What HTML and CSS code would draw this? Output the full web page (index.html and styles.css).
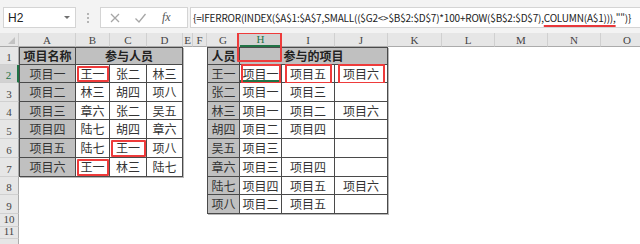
FILE: index.html
```html
<!DOCTYPE html>
<html lang="zh">
<head>
<meta charset="utf-8">
<title>Excel</title>
<link rel="stylesheet" href="styles.css">
</head>
<body>
<div class="app">
  <div class="toolbar">
    <div class="namebox"><span class="nb-text">H2</span><span class="nb-arrow"></span></div>
    <div class="grip"><i></i><i></i><i></i></div>
    <div class="fnbox">
      <svg class="ic" width="12" height="12" viewBox="0 0 12 12"><path d="M2 2L10 10M10 2L2 10" stroke="#a6a6a6" stroke-width="1.3" fill="none"/></svg>
      <svg class="ic" width="13" height="12" viewBox="0 0 13 12"><path d="M1.5 6.5L5 10L11.5 2" stroke="#a6a6a6" stroke-width="1.3" fill="none"/></svg>
      <span class="fx">fx</span>
    </div>
    <div class="formula">{=IFERROR(INDEX($A$1:$A$7,SMALL(($G2&lt;&gt;$B$2:$D$7)*100+ROW($B$2:$D$7),<span class="uline">COLUMN(A$1))),</span>"")}</div>
  </div>

  <div class="sheet">
    <div class="corner"><span class="tri"></span></div>
    <div class="ch k2">A</div><div class="ch k3">B</div><div class="ch k4">C</div><div class="ch k5">D</div>
    <div class="ch k6">E</div><div class="ch k7">F</div><div class="ch k8">G</div><div class="ch k9 sel">H</div>
    <div class="ch k10">I</div><div class="ch k11">J</div><div class="ch k12">K</div><div class="ch k13">L</div>
    <div class="ch k14">M</div><div class="ch k15">N</div><div class="ch k16">O</div>

    <div class="rh r1">1</div>
    <div class="rh r2 sel">2</div>
    <div class="rh r3">3</div>
    <div class="rh r4">4</div>
    <div class="rh r5">5</div>
    <div class="rh r6">6</div>
    <div class="rh r7">7</div>
    <div class="rh r8">8</div>
    <div class="rh r9">9</div>
    <div class="rh r10">10</div>
    <div class="rh r11">11</div>
    <div class="rh r12"></div>

    <div class="tbl left">
      <div class="c g b">项目名称</div><div class="c g b span3">参与人员</div>
      <div class="c g">项目一</div><div class="c mark">王一</div><div class="c">张二</div><div class="c">林三</div>
      <div class="c g">项目二</div><div class="c">林三</div><div class="c">胡四</div><div class="c">项八</div>
      <div class="c g">项目三</div><div class="c">章六</div><div class="c">张二</div><div class="c">吴五</div>
      <div class="c g">项目四</div><div class="c">陆七</div><div class="c">胡四</div><div class="c">章六</div>
      <div class="c g">项目五</div><div class="c">陆七</div><div class="c mark">王一</div><div class="c">项八</div>
      <div class="c g">项目六</div><div class="c mark">王一</div><div class="c">林三</div><div class="c">陆七</div>
    </div>

    <div class="tbl right">
      <div class="c g b">人员</div><div class="c g b span3">参与的项目</div>
      <div class="c g">王一</div><div class="c active markh">项目一</div><div class="c markr">项目五</div><div class="c markr">项目六</div>
      <div class="c g">张二</div><div class="c">项目一</div><div class="c">项目三</div><div class="c"></div>
      <div class="c g">林三</div><div class="c">项目一</div><div class="c">项目二</div><div class="c">项目六</div>
      <div class="c g">胡四</div><div class="c">项目二</div><div class="c">项目四</div><div class="c"></div>
      <div class="c g">吴五</div><div class="c">项目三</div><div class="c"></div><div class="c"></div>
      <div class="c g">章六</div><div class="c">项目三</div><div class="c">项目四</div><div class="c"></div>
      <div class="c g">陆七</div><div class="c">项目四</div><div class="c">项目五</div><div class="c">项目六</div>
      <div class="c g">项八</div><div class="c">项目二</div><div class="c">项目五</div><div class="c"></div>
    </div>

    <div class="hbox"></div>
  </div>
</div>
</body>
</html>
```
FILE: styles.css
```css
html, body {
  margin: 0;
  padding: 0;
  background: #ffffff;
  overflow: hidden;
}
.app {
  width: 640px;
  height: 244px;
  overflow: hidden;
  font-family: "Liberation Sans", "Noto Sans CJK SC", sans-serif;
}

/* ---------- toolbar ---------- */
.toolbar {
  height: 33px;
  box-sizing: border-box;
  padding-top: 7px;
  background: #f3f3f3;
  display: flex;
  align-items: flex-start;
}
.namebox {
  margin-left: 3px;
  width: 73px;
  height: 21px;
  box-sizing: border-box;
  background: #fff;
  border: 1px solid #d4d4d4;
  display: flex;
  align-items: center;
  justify-content: space-between;
  padding: 0 5px 0 4px;
}
.nb-text {
  font-size: 12px;
  color: #222;
}
.nb-arrow {
  width: 0;
  height: 0;
  border-left: 3px solid transparent;
  border-right: 3px solid transparent;
  border-top: 3px solid #707070;
}
.grip {
  width: 24px;
  height: 21px;
  display: flex;
  flex-direction: column;
  align-items: center;
  justify-content: center;
  gap: 2px;
}
.grip i {
  display: block;
  width: 2px;
  height: 2px;
  background: #b5b5b5;
}
.fnbox {
  width: 88px;
  height: 21px;
  box-sizing: border-box;
  background: #fff;
  border: 1px solid #d4d4d4;
  display: flex;
  align-items: center;
  padding-left: 8px;
  gap: 13px;
}
.fx {
  font-family: "Liberation Serif", serif;
  font-style: italic;
  font-size: 12px;
  color: #555;
  margin-left: 2px;
}
.formula {
  margin-left: 2px;
  flex: 1;
  height: 21px;
  box-sizing: border-box;
  background: #fff;
  border: 1px solid #d4d4d4;
  border-right: none;
  padding-left: 2px;
  font-family: "Noto Sans CJK SC", "Liberation Sans", sans-serif;
  font-size: 10px;
  letter-spacing: -0.2px;
  line-height: 19px;
  color: #222;
  white-space: nowrap;
  overflow: hidden;
}
.uline {
  text-decoration: underline;
  text-decoration-color: #e8383a;
  text-decoration-thickness: 2px;
  text-underline-offset: 3px;
}

/* ---------- sheet ---------- */
.sheet {
  display: grid;
  grid-template-columns: 19px 57px 34px 37px 36px 10px 14px 33px 42px 53px 53px 54px 53px 53px 53px 53px;
  grid-template-rows: 14px 18px 18px 19px 18px 19px 19px 19px 18px 19px 13px 12px 13px;
  height: 211px;
  overflow: hidden;
}
.corner {
  grid-row: 1;
  grid-column: 1;
  background: #e6e6e6;
  border-right: 1px solid #d0d0d0;
  border-bottom: 1px solid #ababab;
  box-sizing: border-box;
  position: relative;
}
.tri {
  position: absolute;
  right: 3px;
  bottom: 2px;
  width: 0;
  height: 0;
  border-left: 7px solid transparent;
  border-bottom: 7px solid #c2c2c2;
}
.ch {
  grid-row: 1;
  background: #e6e6e6;
  border-right: 1px solid #d0d0d0;
  border-bottom: 1px solid #ababab;
  box-sizing: border-box;
  font-family: "Liberation Serif", "DejaVu Serif", serif;
  font-size: 11px;
  color: #444;
  display: flex;
  align-items: flex-end;
  justify-content: center;
  line-height: 12px;
}
.k2 { grid-column: 2; }
.k3 { grid-column: 3; }
.k4 { grid-column: 4; }
.k5 { grid-column: 5; }
.k6 { grid-column: 6; }
.k7 { grid-column: 7; }
.k8 { grid-column: 8; }
.k9 { grid-column: 9; }
.k10 { grid-column: 10; }
.k11 { grid-column: 11; }
.k12 { grid-column: 12; }
.k13 { grid-column: 13; }
.k14 { grid-column: 14; }
.k15 { grid-column: 15; }
.k16 { grid-column: 16; }
.ch.sel {
  background: #d2d2d2;
  color: #217346;
  border-bottom: 2px solid #217346;
}
.rh {
  grid-column: 1;
  background: #e6e6e6;
  border-right: 1px solid #ababab;
  border-bottom: 1px solid #d0d0d0;
  box-sizing: border-box;
  font-family: "Liberation Serif", "DejaVu Serif", serif;
  font-size: 11px;
  color: #444;
  display: flex;
  align-items: flex-end;
  justify-content: center;
  line-height: 14px;
}
.rh.sel {
  color: #217346;
  background: #d2d2d2;
  border-right: 2px solid #217346;
}
.r1 { grid-row: 2; }
.r2 { grid-row: 3; }
.r3 { grid-row: 4; }
.r4 { grid-row: 5; }
.r5 { grid-row: 6; }
.r6 { grid-row: 7; }
.r7 { grid-row: 8; }
.r8 { grid-row: 9; }
.r9 { grid-row: 10; }
.r10 { grid-row: 11; }
.r11 { grid-row: 12; }
.r12 { grid-row: 13; }

/* ---------- tables ---------- */
.tbl {
  display: grid;
  border-top: 1px solid #4a4a4a;
  border-left: 1px solid #4a4a4a;
  box-shadow: 1px 1px 0 #b8b8b8;
  font-family: "Noto Sans CJK SC", sans-serif;
  font-size: 12px;
  color: #333;
  z-index: 1;
}
.tbl.left {
  grid-column: 2 / 6;
  grid-row: 2 / 9;
  grid-template-columns: 56px 34px 37px 36px;
  grid-template-rows: 17px 18px 19px 18px 19px 19px 19px;
}
.tbl.right {
  grid-column: 8 / 12;
  grid-row: 2 / 11;
  grid-template-columns: 32px 42px 53px 53px;
  grid-template-rows: 17px 18px 19px 18px 19px 19px 19px 18px 19px;
}
.c {
  border-right: 1px solid #4a4a4a;
  border-bottom: 1px solid #4a4a4a;
  box-sizing: border-box;
  background: #fff;
  display: flex;
  align-items: center;
  justify-content: center;
  line-height: 1;
  position: relative;
  white-space: nowrap;
}
.c.g {
  background: #c0c0c0;
}
.c.b {
  font-weight: bold;
  color: #222;
}
.span3 {
  grid-column: span 3;
}
.c.active {
  box-shadow: inset 0 -2px 0 #217346;
}
.c.mark::after,
.c.markh::after,
.c.markr::after {
  content: "";
  position: absolute;
  border: 2px solid #ee3b3b;
  border-radius: 1px;
}
.c.mark::after {
  inset: 1px 0 0 1px;
}
.c.markh::after {
  inset: -1px 0 -2px 1px;
}
.c.markr::after {
  inset: -1px 2px -2px 3px;
}
.hbox {
  grid-column: 9;
  grid-row: 1 / 3;
  margin: -1px 0 3px -3px;
  border: 2px solid #ee3b3b;
  border-radius: 1px;
  z-index: 3;
}
```
